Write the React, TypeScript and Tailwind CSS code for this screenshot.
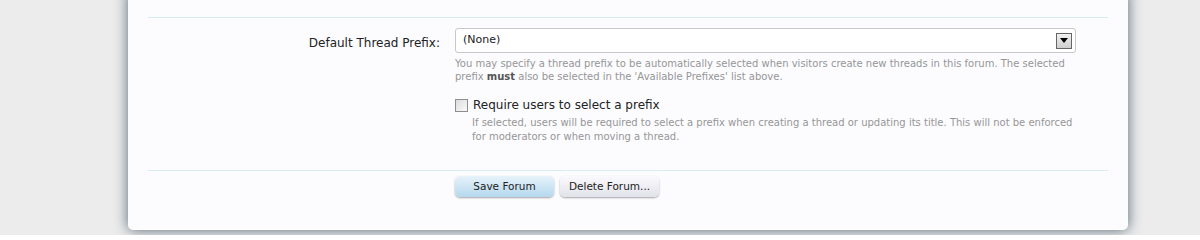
export default function App() {
  return (
    <div className="h-[235px] overflow-hidden bg-[#ececec] font-['DejaVu_Sans',sans-serif]">
      <div className="ml-[128px] -mt-[8px] w-[1000px] h-[238px] rounded-b-[5px] bg-[#fcfcff] px-[20px] pt-[8px] shadow-[0_0_14px_rgba(60,80,95,0.85)]">
        <div className="h-[18px] border-b border-[#d7edf0]" />

        <div className="flex pt-[10px]">
          <label className="w-[307px] shrink-0 pr-[15px] pt-[6px] text-right text-[12px] text-[#222]">
            Default Thread Prefix:
          </label>
          <div className="w-[621px]">
            <div className="flex h-[25px] items-center justify-between rounded-[3px] border border-[#c8c8c8] bg-white pl-[7px] pr-[3px] text-[11px] text-[#222]">
              <span>(None)</span>
              <span className="flex h-[16px] w-[16px] items-center justify-center border border-[#666] bg-gradient-to-b from-[#f2f2f2] to-[#cfcfcf]">
                <svg width="8" height="5" viewBox="0 0 8 5">
                  <path d="M0 0h8L4 5z" fill="#000" />
                </svg>
              </span>
            </div>
            <div className="mt-[4px] text-[10px] leading-[13px] text-[#969696]">
              <p>You may specify a thread prefix to be automatically selected when visitors create new threads in this forum. The selected</p>
              <p>
                prefix <b className="font-bold text-[#555]">must</b> also be selected in the 'Available Prefixes' list above.
              </p>
            </div>

            <div className="mt-[13px] flex items-center gap-[5px]">
              <span className="h-[13px] w-[13px] border border-[#8e8e8e] bg-gradient-to-br from-[#dcdcdc] to-[#fafafa]" />
              <span className="text-[12px] text-[#222]">Require users to select a prefix</span>
            </div>
            <div className="mt-[2px] pl-[17px] text-[10px] leading-[14px] text-[#969696]">
              <p>If selected, users will be required to select a prefix when creating a thread or updating its title. This will not be enforced</p>
              <p>for moderators or when moving a thread.</p>
            </div>
          </div>
        </div>

        <div className="mt-[26px] border-t border-[#d7edf0] pt-[5px] pl-[307px] flex gap-[6px]">
          <button className="h-[21px] w-[99px] rounded-[5px] bg-gradient-to-b from-[#e8f3fa] to-[#b4d8ee] text-[10.5px] text-[#222] shadow-[0_1px_2px_rgba(0,0,0,0.35)]">
            Save Forum
          </button>
          <button className="h-[21px] w-[99px] rounded-[5px] bg-gradient-to-b from-[#fafafe] to-[#e2e2ea] text-[10.5px] text-[#222] shadow-[0_1px_2px_rgba(0,0,0,0.35)]">
            Delete Forum...
          </button>
        </div>
      </div>
    </div>
  );
}
